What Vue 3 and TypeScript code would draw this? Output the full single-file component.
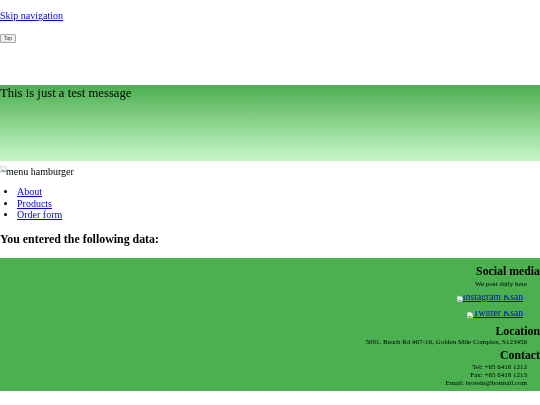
<script setup lang="ts">
const navItems: string[] = ['About', 'Products', 'Order form']
const socials: { label: string; cls: string }[] = [
  { label: 'Instagram Ksan', cls: 'first' },
  { label: 'Twitter Ksan', cls: 'second' },
]
const contacts: string[] = ['Tel: +65 6418 1212', 'Fax: +65 6418 1213', 'Email: brotein@hotmail.com']
</script>

<template>
  <div class="page">
    <p class="skip"><a href="#">Skip navigation</a></p>
    <button class="top" type="button">Top</button>
    <section class="banner">This is just a test message</section>
    <div class="burger">
      <svg class="broken" width="7" height="8" viewBox="0 0 9 9">
        <path d="M.5.5h5.5l2.5 2.5v5.5h-8z" fill="#eef2f8" stroke="#b5bcc8" stroke-width=".6" />
        <path d="M1 8l2.5-3 2 2 1-1 1.5 2z" fill="#7aa86a" />
      </svg><span>menu hamburger</span>
    </div>
    <ul class="nav">
      <li v-for="item in navItems" :key="item"><a href="#">{{ item }}</a></li>
    </ul>
    <h3 class="entered">You entered the following data:</h3>
    <footer class="footer">
      <h3 class="head">Social media</h3>
      <p class="line daily">We post daily here</p>
      <div v-for="s in socials" :key="s.label" class="social" :class="s.cls">
        <svg class="mini" width="6" height="6" viewBox="0 0 9 9">
          <path d="M.5.5h5.5l2.5 2.5v5.5h-8z" fill="#eef2f8" stroke="#c5ccd8" stroke-width=".6" />
          <path d="M1 8l2.5-3 2 2 1-1 1.5 2z" fill="#7aa86a" />
        </svg><a href="#">{{ s.label }}</a>
      </div>
      <h3 class="head">Location</h3>
      <p class="line address">5001, Beach Rd #07-16, Golden Mile Complex, S123456</p>
      <h3 class="head">Contact</h3>
      <p v-for="c in contacts" :key="c" class="line tight">{{ c }}</p>
    </footer>
  </div>
</template>

<style>
html, body { margin: 0; padding: 0; background: #fff; overflow: hidden; }
</style>

<style scoped>
.page {
  width: 540px;
  height: 405px;
  overflow: hidden;
  font-family: "Liberation Serif", serif;
  font-size: 10px;
  color: #000;
  filter: blur(0.35px);
}
a { color: #0000ee; text-decoration: underline; }
.skip { margin: 0; padding-top: 10px; height: 24px; line-height: 12px; }
.top {
  display: block;
  width: 16px;
  height: 9px;
  padding: 0;
  font: 5px/7px "Liberation Sans", sans-serif;
  background: #efefef;
  border: 1px solid #a8a8a8;
  border-radius: 1px;
  color: #333;
}
.banner {
  margin-top: 42px;
  height: 76px;
  font-size: 12.7px;
  line-height: 17px;
  background: linear-gradient(#4caf50, #c8f7c9);
}
.burger { height: 18px; padding-top: 1px; line-height: 17px; display: flex; align-items: center; }
.broken { flex: none; align-self: flex-start; margin-top: 3px; margin-right: -1px; }
.nav { margin: 6px 0 0; padding-left: 17px; line-height: 11.5px; }
.entered { margin: 11px 0 0; font-size: 11.9px; line-height: 15px; height: 26px; }
.footer {
  height: 133px;
  background: #4caf50;
  text-align: right;
  overflow: hidden;
}
.head { margin: 0; font-size: 11.8px; line-height: 15px; }
.head:first-child { margin-top: 6px; }
.line { margin: 0 13px 0 0; font-size: 7px; line-height: 9px; }
.line.daily { margin-top: 1px; }
.line.address { margin-top: -1px; margin-bottom: 1px; }
.line.tight { line-height: 8px; }
.social {
  margin-right: 17px;
  height: 8px;
  overflow: hidden;
  line-height: 12px;
  font-size: 9.6px;
  display: flex;
  justify-content: flex-end;
  align-items: flex-end;
}
.mini { flex: none; margin-bottom: 1px; }
.social.first { margin-top: 6px; }
.social.second { margin-top: 8px; margin-bottom: 5px; }
</style>
